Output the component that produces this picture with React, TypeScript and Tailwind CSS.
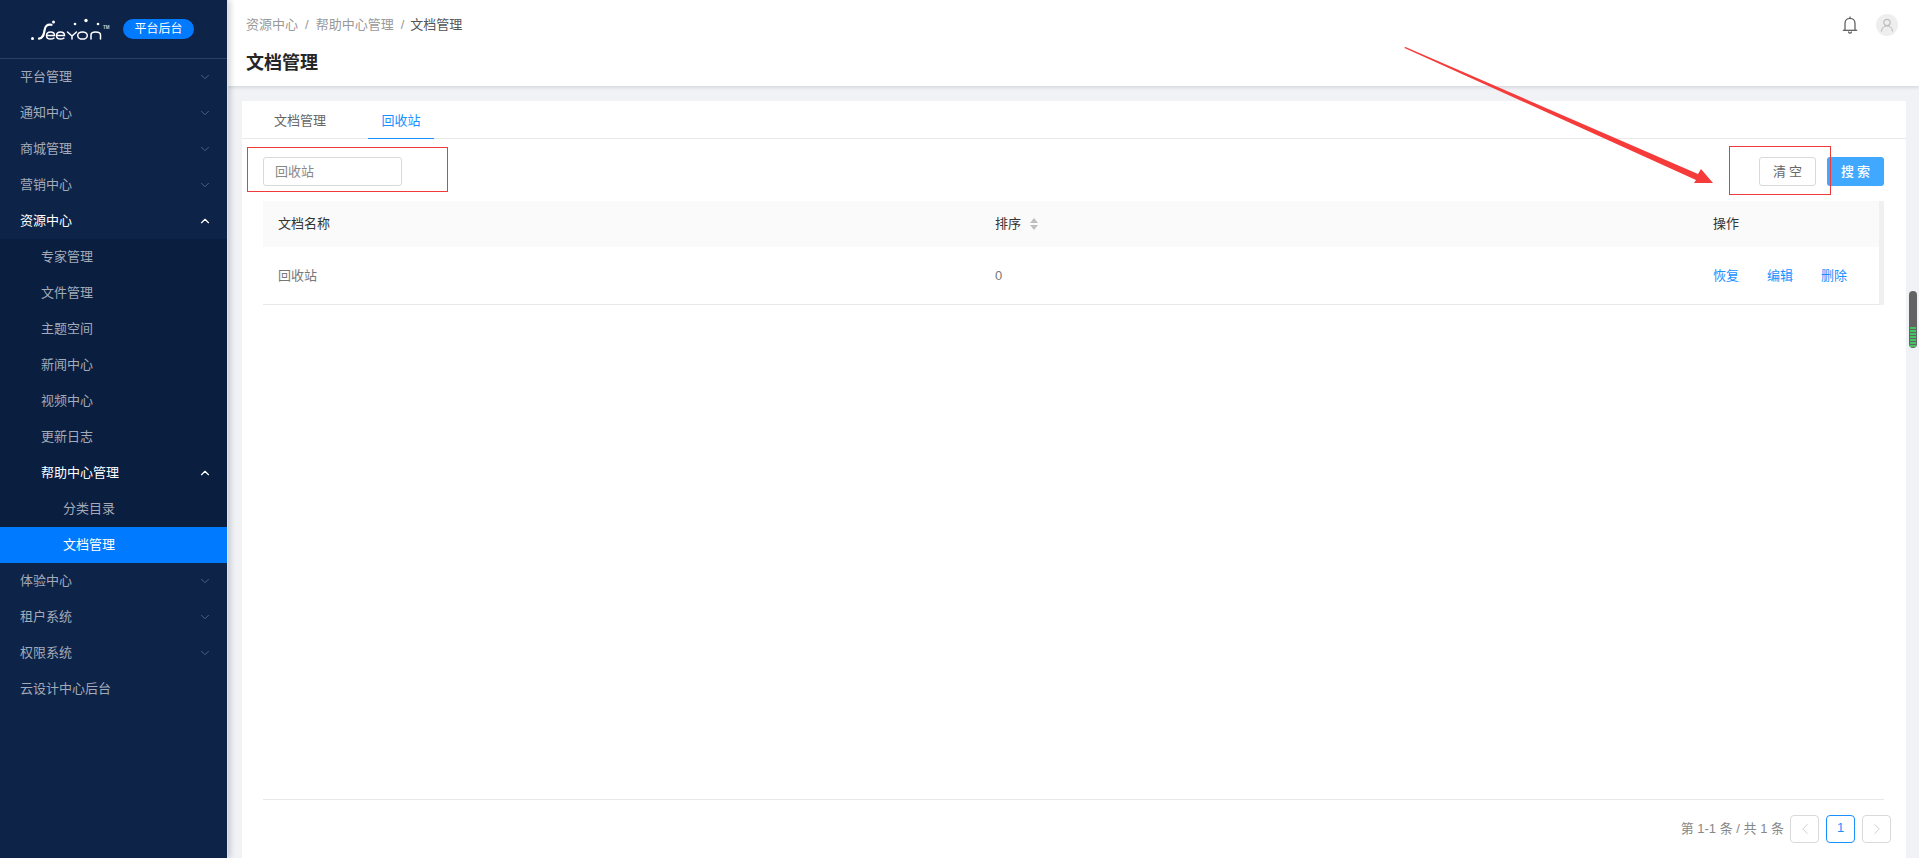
import { ChevronDown, ChevronUp, ChevronLeft, ChevronRight } from "lucide-react";

interface NavItem {
  label: string;
  level: 1 | 2 | 3;
  arrow?: "down" | "up";
  active?: boolean;
  bright?: boolean;
}

const topBefore: NavItem[] = [
  { label: "平台管理", level: 1, arrow: "down" },
  { label: "通知中心", level: 1, arrow: "down" },
  { label: "商城管理", level: 1, arrow: "down" },
  { label: "营销中心", level: 1, arrow: "down" },
  { label: "资源中心", level: 1, arrow: "up", bright: true },
];

const subItems: NavItem[] = [
  { label: "专家管理", level: 2 },
  { label: "文件管理", level: 2 },
  { label: "主题空间", level: 2 },
  { label: "新闻中心", level: 2 },
  { label: "视频中心", level: 2 },
  { label: "更新日志", level: 2 },
  { label: "帮助中心管理", level: 2, arrow: "up", bright: true },
  { label: "分类目录", level: 3 },
  { label: "文档管理", level: 3, active: true },
];

const topAfter: NavItem[] = [
  { label: "体验中心", level: 1, arrow: "down" },
  { label: "租户系统", level: 1, arrow: "down" },
  { label: "权限系统", level: 1, arrow: "down" },
  { label: "云设计中心后台", level: 1 },
];

function NavRow({ item }: { item: NavItem }) {
  const pad =
    item.level === 1 ? "pl-[20px]" : item.level === 2 ? "pl-[41px]" : "pl-[63px]";
  return (
    <div
      className={`flex h-[36px] items-center justify-between pr-[15px] text-[13px] ${pad} ${
        item.active || item.bright ? "text-white" : "text-[#a3abb8]"
      } ${item.active ? "bg-[#007aff]" : ""}`}
    >
      <span>{item.label}</span>
      {item.arrow === "down" && <ChevronDown size={14} strokeWidth={1.5} className="text-[#56678a]" />}
      {item.arrow === "up" && <ChevronUp size={14} strokeWidth={2} className="text-white" />}
    </div>
  );
}

function Logo() {
  return (
    <svg width="86" height="30" viewBox="28 14 86 30" fill="none" className="shrink-0">
      <circle cx="32.500" cy="38.500" r="1.500" fill="#fff" />
      <circle cx="53.500" cy="22" r="1.500" fill="#fff" />
      <circle cx="75" cy="24" r="1.300" fill="#fff" />
      <circle cx="86" cy="20.500" r="1.700" fill="#fff" />
      <circle cx="98" cy="24" r="1.300" fill="#fff" />
      <g stroke="#fff" strokeWidth="1.500" strokeLinecap="round">
        <path d="M51.500 24.800c-4.500-1-6.500 1.500-7 5.700-.5 4-1.800 7.800-5.500 8.200" strokeWidth="2.200" />
        <path d="M46.500 35.500h8c0-2-1.600-3.500-4-3.500s-4 1.600-4 3.800 1.700 3.300 4 3.300c1.200 0 2.400-.3 3.400-1" />
        <path d="M56.500 35.500h8c0-2-1.600-3.500-4-3.500s-4 1.600-4 3.800 1.700 3.300 4 3.300c1.200 0 2.400-.3 3.400-1" />
        <path d="M67.500 32l4.500 4 4.500-4M72 36v3" />
        <ellipse cx="82.500" cy="35.500" rx="4.800" ry="3.600" />
        <path d="M91 39v-4c0-2 1.500-3 4.500-3s5 1 5 3v4" />
      </g>
      <text x="103" y="29" fill="#c9ced8" fontSize="4.500" fontFamily="Liberation Sans, sans-serif" fontWeight="700">
        TM
      </text>
    </svg>
  );
}

function Sidebar() {
  return (
    <aside className="z-10 flex h-full w-[227px] shrink-0 flex-col bg-[#0e2348] shadow-[1px_0_0_#dfe1e6,3px_0_6px_rgba(0,21,41,0.2)]">
      <div className="flex h-[59px] shrink-0 items-center gap-[9px] border-b border-[#2b3e63] pl-[28px]">
        <Logo />
        <span className="flex h-[20px] w-[71px] items-center justify-center rounded-full bg-[#007aff] text-[12px] text-white">
          平台后台
        </span>
      </div>
      {topBefore.map((item) => (
        <NavRow key={item.label} item={item} />
      ))}
      <div className="bg-[#0a1e40]">
        {subItems.map((item) => (
          <NavRow key={item.label} item={item} />
        ))}
      </div>
      {topAfter.map((item) => (
        <NavRow key={item.label} item={item} />
      ))}
    </aside>
  );
}

function Header() {
  return (
    <header className="z-[5] flex h-[86px] shrink-0 justify-between bg-white pl-[19px] pr-[21px] shadow-[0_1px_4px_rgba(0,21,41,0.15)]">
      <div>
        <div className="mt-[16px] flex h-[18px] items-center text-[13px] leading-[18px] text-[#999]">
          <span>资源中心</span>
          <span className="mx-[7px]">/</span>
          <span>帮助中心管理</span>
          <span className="ml-[7px] mr-[6px]">/</span>
          <span className="text-[#555]">文档管理</span>
        </div>
        <h1 className="mt-[16px] text-[18px] font-bold leading-[26px] text-[#262626]">文档管理</h1>
      </div>
      <div className="mt-[14px] flex h-[22px] items-center gap-[18px]">
        <svg width="16" height="18" viewBox="0 0 16 18" fill="none" stroke="#555" strokeWidth="1.200">
          <path d="M3 14V7.500C3 4.500 5 2.500 8 2.500s5 2 5 5V14" />
          <path d="M.8 14.300h14.400" />
          <path d="M6.500 15.500c0 1 .7 1.700 1.500 1.700s1.500-.7 1.500-1.700" />
          <path d="M8 .6v1.800" />
        </svg>
        <div className="flex h-[22px] w-[22px] items-center justify-center rounded-full bg-[#eeeeee]">
          <svg width="14" height="14" viewBox="0 0 14 14" fill="none" stroke="#bdbdbd" strokeWidth="1.200">
            <circle cx="7" cy="4.500" r="3.200" />
            <path d="M1.500 13.500c0-3.200 2.300-5.500 5.500-5.500s5.500 2.300 5.500 5.500" />
          </svg>
        </div>
      </div>
    </header>
  );
}

function Table() {
  return (
    <div className="ml-[21px] mr-[22px] mt-[15px] flex">
      <div className="flex-1 text-[13px]">
        <div className="grid h-[46px] grid-cols-[717px_718px_1fr] items-center bg-[#fafafa] text-[#333]">
          <div className="pl-[15px]">文档名称</div>
          <div className="flex items-center pl-[15px]">
            排序
            <span className="ml-[9px] flex flex-col gap-[2px]">
              <span className="h-0 w-0 border-x-[4px] border-b-[5px] border-x-transparent border-b-[#bfbfbf]" />
              <span className="h-0 w-0 border-x-[4px] border-t-[5px] border-x-transparent border-t-[#bfbfbf]" />
            </span>
          </div>
          <div className="pl-[15px]">操作</div>
        </div>
        <div className="grid h-[58px] grid-cols-[717px_718px_1fr] items-center border-b border-[#e8e8e8] text-[#777]">
          <div className="pl-[15px]">回收站</div>
          <div className="pl-[15px]">0</div>
          <div className="flex gap-[28px] pl-[15px] text-[#1890ff]">
            <span>恢复</span>
            <span>编辑</span>
            <span>删除</span>
          </div>
        </div>
      </div>
      <div className="w-[5px] bg-[#f0f0f0]" />
    </div>
  );
}

function Pagination() {
  const box = "flex h-[28px] w-[29px] items-center justify-center rounded-[4px] border";
  return (
    <div className="ml-[21px] mr-[22px] mt-auto h-[59px] shrink-0 border-t border-[#e8e8e8] pt-[15px]">
      <div className="mr-[-7px] flex items-center justify-end gap-[7px] text-[13px] text-[#888]">
        <span className="mr-[-1px]">第 1-1 条 / 共 1 条</span>
        <span className={`${box} border-[#d9d9d9] text-[#bfbfbf]`}>
          <ChevronLeft size={18} strokeWidth={1} />
        </span>
        <span className={`${box} border-[#1890ff] pb-[3px] text-[#1890ff]`}>1</span>
        <span className={`${box} border-[#d9d9d9] text-[#bfbfbf]`}>
          <ChevronRight size={18} strokeWidth={1} />
        </span>
      </div>
    </div>
  );
}

function Annotations() {
  return (
    <>
      <div className="pointer-events-none absolute left-[247px] top-[147px] z-20 h-[45px] w-[201px] border border-[#ee3b3b]" />
      <div className="pointer-events-none absolute left-[1729px] top-[146px] z-20 h-[49px] w-[102px] border border-[#ee3b3b]" />
      <svg className="pointer-events-none absolute left-0 top-0 z-20" width="1919" height="858">
        <polygon
          points="1405,47 1405.500,47 1698,174 1701,169 1713,183 1694,183 1696,180 1404.500,48"
          fill="#f63b3b"
        />
      </svg>
    </>
  );
}

function PageScrollbar() {
  return (
    <div className="absolute left-[1909px] top-[291px] z-20 flex h-[57px] w-[8px] flex-col justify-end gap-[1px] overflow-hidden rounded-full bg-[#636363] px-[1px] pb-[1px]">
      {Array.from({ length: 7 }).map((_, i) => (
        <span key={i} className="h-[2px] shrink-0 bg-[#45c463]" />
      ))}
    </div>
  );
}

export default function App() {
  return (
    <div className="relative flex h-screen w-full overflow-hidden bg-[#f0f2f5] font-['Liberation_Sans','Noto_Sans_CJK_SC',sans-serif]">
      <Sidebar />
      <main className="flex min-w-0 flex-1 flex-col">
        <Header />
        <div className="flex min-h-0 flex-1 pl-[15px] pr-[13px] pt-[15px]">
          <section className="flex flex-1 flex-col bg-white">
            <div className="flex h-[38px] shrink-0 border-b border-[#e8e8e8] pl-[18px]">
              <div className="flex h-[37px] items-center px-[14px] pt-[3px] text-[13px] text-[#666]">文档管理</div>
              <div className="ml-[28px] flex h-[38px] w-[66px] items-center justify-center border-b border-[#1890ff] pt-[3px] text-[13px] text-[#1890ff]">
                回收站
              </div>
            </div>
            <div className="ml-[21px] mr-[22px] mt-[18px] flex items-center justify-between">
              <input
                placeholder="回收站"
                className="h-[29px] w-[139px] rounded-[3px] border border-[#d9d9d9] pl-[11px] text-[13px] placeholder:text-[#888] outline-none"
              />
              <div className="flex gap-[11px] text-[13px]">
                <button className="flex h-[29px] w-[57px] items-center justify-center rounded-[3px] border border-[#d9d9d9] pl-[3px] tracking-[3px] text-[#666]">
                  清空
                </button>
                <button className="flex h-[29px] w-[57px] items-center justify-center rounded-[3px] bg-[#40a9ff] pl-[3px] font-medium tracking-[3px] text-white">
                  搜索
                </button>
              </div>
            </div>
            <Table />
            <Pagination />
          </section>
        </div>
      </main>
      <PageScrollbar />
      <Annotations />
    </div>
  );
}
